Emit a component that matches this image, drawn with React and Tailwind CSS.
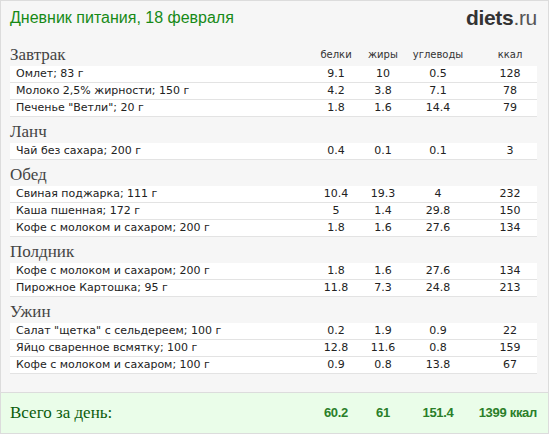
const MEALS = [
  {
    title: 'Завтрак',
    items: [
      ['Омлет; 83 г', '9.1', '10', '0.5', '128'],
      ['Молоко 2,5% жирности; 150 г', '4.2', '3.8', '7.1', '78'],
      ['Печенье "Ветли"; 20 г', '1.8', '1.6', '14.4', '79'],
    ],
  },
  {
    title: 'Ланч',
    items: [['Чай без сахара; 200 г', '0.4', '0.1', '0.1', '3']],
  },
  {
    title: 'Обед',
    items: [
      ['Свиная поджарка; 111 г', '10.4', '19.3', '4', '232'],
      ['Каша пшенная; 172 г', '5', '1.4', '29.8', '150'],
      ['Кофе с молоком и сахаром; 200 г', '1.8', '1.6', '27.6', '134'],
    ],
  },
  {
    title: 'Полдник',
    items: [
      ['Кофе с молоком и сахаром; 200 г', '1.8', '1.6', '27.6', '134'],
      ['Пирожное Картошка; 95 г', '11.8', '7.3', '24.8', '213'],
    ],
  },
  {
    title: 'Ужин',
    items: [
      ['Салат "щетка" с сельдереем; 100 г', '0.2', '1.9', '0.9', '22'],
      ['Яйцо сваренное всмятку; 100 г', '12.8', '11.6', '0.8', '159'],
      ['Кофе с молоком и сахаром; 100 г', '0.9', '0.8', '13.8', '67'],
    ],
  },
]

const sans = "font-['DejaVu_Sans',Verdana,sans-serif]"
const serif = "font-['Liberation_Serif','Times_New_Roman',serif]"

function Cols({ values, className = '' }) {
  return (
    <>
      <span className={`w-[50px] shrink-0 text-center ${className}`}>{values[0]}</span>
      <span className={`w-[44px] shrink-0 text-center ${className}`}>{values[1]}</span>
      <span className={`w-[66px] shrink-0 text-center ${className}`}>{values[2]}</span>
      <span className={`w-[66px] shrink-0 pl-[12px] text-center ${className}`}>{values[3]}</span>
    </>
  )
}

function Meal({ meal, first }) {
  return (
    <div>
      <div className="flex h-[26px] items-start pt-[4px]">
        <span className={`flex-1 text-[17px] leading-[22px] text-[#444] ${serif}`}>{meal.title}</span>
        {first && (
          <div className={`flex pt-[4px] text-[10px] leading-[14px] text-[#333] ${sans}`}>
            <Cols values={['белки', 'жиры', 'углеводы', 'ккал']} />
          </div>
        )}
      </div>
      {meal.items.map((it, i) => (
        <div key={i} className={`flex h-[17px] items-center border-b border-[#e3e3e3] bg-white text-[11px] text-[#222] ${sans}`}>
          <span className="flex-1 truncate pl-[6px]">{it[0]}</span>
          <Cols values={it.slice(1)} />
        </div>
      ))}
    </div>
  )
}

export default function App() {
  return (
    <div className="flex h-[434px] w-[549px] flex-col border border-[#dcdcdc] bg-[#f6f6f6]">
      <div className="flex h-[39px] items-start justify-between pl-[9px] pr-[11px] pt-[6px]">
        <h1 className="font-['Liberation_Sans',Arial,sans-serif] text-[16px] leading-[22px] text-[#168a16]">
          Дневник питания, 18 февраля
        </h1>
        <div className="font-['Liberation_Sans',Arial,sans-serif] text-[21px] leading-[22px] tracking-[-0.3px]">
          <span className="font-bold text-[#333]">diets</span>
          <span className="text-[#555]">.ru</span>
        </div>
      </div>

      <div className="pl-[9px] pr-[11px]">
        {MEALS.map((m, i) => (
          <Meal key={m.title} meal={m} first={i === 0} />
        ))}
      </div>

      <div className="mt-auto flex h-[41px] items-center border-t border-[#dcdcdc] bg-[#eafde9] pl-[9px] pr-[11px]">
        <span className={`flex-1 text-[17px] text-[#0b5c0b] ${serif}`}>Всего за день:</span>
        <span className="flex font-['Liberation_Sans',Arial,sans-serif] text-[13px] font-bold tracking-[-0.3px] text-[#2a7f2a]">
          <span className="w-[50px] text-center">60.2</span>
          <span className="w-[44px] text-center">61</span>
          <span className="w-[66px] text-center">151.4</span>
          <span className="w-[66px] text-right">1399 ккал</span>
        </span>
      </div>
    </div>
  )
}
